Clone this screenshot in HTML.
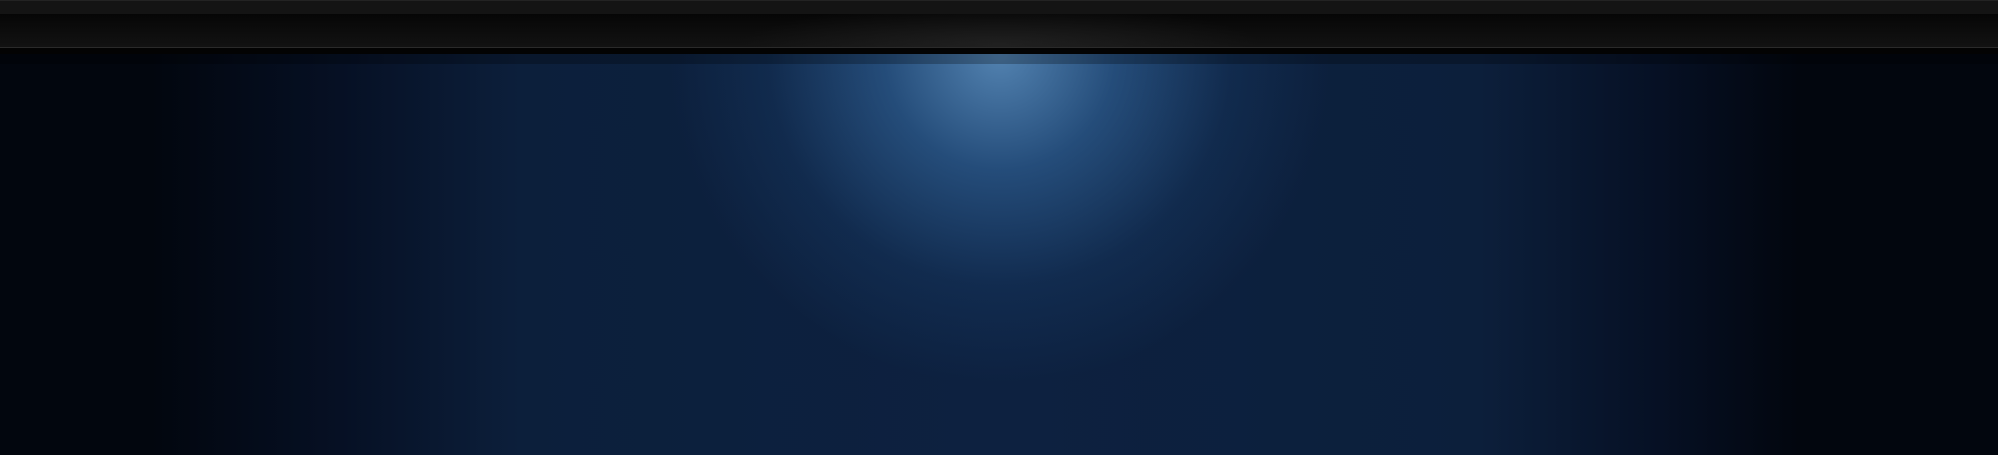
<!DOCTYPE html>
<html><head><style>
html,body{margin:0;padding:0;width:1998px;height:455px;overflow:hidden;background:#02060e}
.top{position:absolute;left:0;top:0;width:1998px;height:14px;background:#141414;border-top:1px solid #232323;box-sizing:border-box}
.bar{position:absolute;left:0;top:14px;width:1998px;height:33px;background:linear-gradient(#060606,#121212)}
.bar2{position:absolute;left:0;top:14px;width:1998px;height:33px;background:radial-gradient(ellipse 260px 40px at 1000px 30px,rgba(60,60,60,.35),rgba(0,0,0,0))}
.line{position:absolute;left:0;top:47px;width:1998px;height:1px;background:#2a2a2a}
.blk{position:absolute;left:0;top:48px;width:1998px;height:6px;background:#030303}
.main{position:absolute;left:0;top:54px;width:1998px;height:401px;
background:linear-gradient(90deg,#02060e 0,#02060e 150px,#061024 340px,#0c1f3b 520px,#0d2140 1000px,#0c1f3b 1480px,#061024 1660px,#02060e 1800px,#02060e 1998px)}
.glow{position:absolute;left:0;top:54px;width:1998px;height:401px;
background:radial-gradient(ellipse 330px 330px at 1000px 0px,rgba(100,155,205,.8) 0%,rgba(60,120,180,.5) 35%,rgba(35,85,140,.2) 70%,rgba(0,0,0,0) 100%)}
.band{position:absolute;left:0;top:54px;width:1998px;height:10px;background:rgba(0,0,0,.25)}
</style></head><body>
<div class="top"></div><div class="bar"></div><div class="bar2"></div><div class="line"></div><div class="blk"></div>
<div class="main"></div><div class="glow"></div><div class="band"></div>
</body></html>
